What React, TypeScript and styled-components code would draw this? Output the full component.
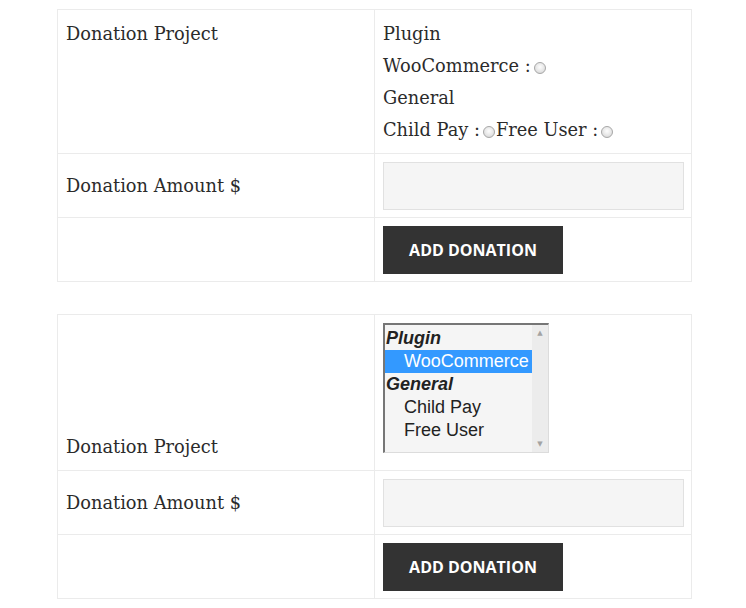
import * as React from 'react';
import styled, { createGlobalStyle } from 'styled-components';

const Global = createGlobalStyle`
  html, body {
    margin: 0;
    padding: 0;
    background: #fff;
  }
  body {
    font-family: "DejaVu Serif", "Liberation Serif", serif;
    color: #2b2b2b;
  }
`;

const Page = styled.div`
  padding: 9px 0 0 57px;
  display: flex;
  flex-direction: column;
  gap: 32px;
`;

const Table = styled.table`
  border-collapse: collapse;
  width: 635px;
  table-layout: fixed;
  font-size: 17.8px;
  line-height: 32px;
`;

const Cell = styled.td<{ $align?: 'top' | 'middle' | 'bottom' }>`
  border: 1px solid #ebebeb;
  padding: 8px 8px 7px;
  vertical-align: ${p => p.$align || 'top'};
  width: 50%;
`;

const Line = styled.div`
  display: flex;
  align-items: center;
  white-space: nowrap;
`;

const Radio = styled.input.attrs({ type: 'radio' })`
  appearance: none;
  margin: 3px 1px 0 3px;
  width: 12px;
  height: 12px;
  border-radius: 50%;
  border: 1px solid #a8a8a8;
  background: radial-gradient(circle at 50% 40%, #fdfdfd 0%, #e6e6e6 55%, #cfcfcf 100%);
  box-sizing: border-box;
`;

const TextInput = styled.input`
  display: block;
  box-sizing: border-box;
  width: 301px;
  height: 48px;
  border: 1px solid #e1e1e1;
  background: #f5f5f5;
  margin: 0;
  padding: 0 10px;
`;

const Button = styled.button`
  display: block;
  width: 180px;
  height: 48px;
  border: 0;
  margin: 0;
  background: #333;
  color: #fff;
  font-family: "Open Sans", "Noto Sans", sans-serif;
  font-weight: 700;
  font-size: 16px;
  letter-spacing: 0;
  text-transform: uppercase;
  cursor: pointer;
`;

const ListBox = styled.div`
  display: flex;
  box-sizing: border-box;
  width: 166px;
  height: 130px;
  background: #f5f5f5;
  border-top: 2px solid #767676;
  border-left: 2px solid #767676;
  border-right: 1px solid #dcdcdc;
  border-bottom: 1px solid #dcdcdc;
  font-family: "Liberation Sans", Arial, sans-serif;
  font-size: 18px;
  line-height: 23px;
  color: #222;
  margin-bottom: 10px;
`;

const Options = styled.div`
  flex: 1;
  overflow: hidden;
  padding-top: 2px;
`;

const Group = styled.div`
  font-weight: 700;
  font-style: italic;
  padding-left: 1px;
  white-space: nowrap;
`;

const Option = styled.div<{ $selected?: boolean }>`
  padding-left: 19px;
  white-space: nowrap;
  overflow: hidden;
  background: ${p => (p.$selected ? '#3399ff' : 'transparent')};
  color: ${p => (p.$selected ? '#fff' : '#222')};
`;

const Scrollbar = styled.div`
  width: 16px;
  background: #ececec;
  display: flex;
  flex-direction: column;
  justify-content: space-between;
  align-items: center;
  color: #a3a3a3;
  font-size: 7px;
  line-height: 16px;
  font-family: "DejaVu Sans", sans-serif;
`;

interface FormProps {
    select?: boolean
}

const DonationForm = ({ select }: FormProps) => (
    <Table>
        <tbody>
        <tr>
            <Cell $align={select ? 'bottom' : 'top'}>Donation Project</Cell>
            <Cell>
                {select ? (
                    <ListBox role="listbox">
                        <Options>
                            <Group>Plugin</Group>
                            <Option $selected>WooCommerce</Option>
                            <Group>General</Group>
                            <Option>Child Pay</Option>
                            <Option>Free User</Option>
                        </Options>
                        <Scrollbar>
                            <span>▲</span>
                            <span>▼</span>
                        </Scrollbar>
                    </ListBox>
                ) : (
                    <>
                        <Line>Plugin</Line>
                        <Line>WooCommerce :<Radio name="project" /></Line>
                        <Line>General</Line>
                        <Line>Child Pay :<Radio name="project" />Free User :<Radio name="project" /></Line>
                    </>
                )}
            </Cell>
        </tr>
        <tr>
            <Cell $align="middle">Donation Amount $</Cell>
            <Cell><TextInput type="text" /></Cell>
        </tr>
        <tr>
            <Cell />
            <Cell><Button>Add Donation</Button></Cell>
        </tr>
        </tbody>
    </Table>
);

export default function App() {
    return (
        <>
            <Global />
            <Page>
                <DonationForm />
                <DonationForm select />
            </Page>
        </>
    );
}
